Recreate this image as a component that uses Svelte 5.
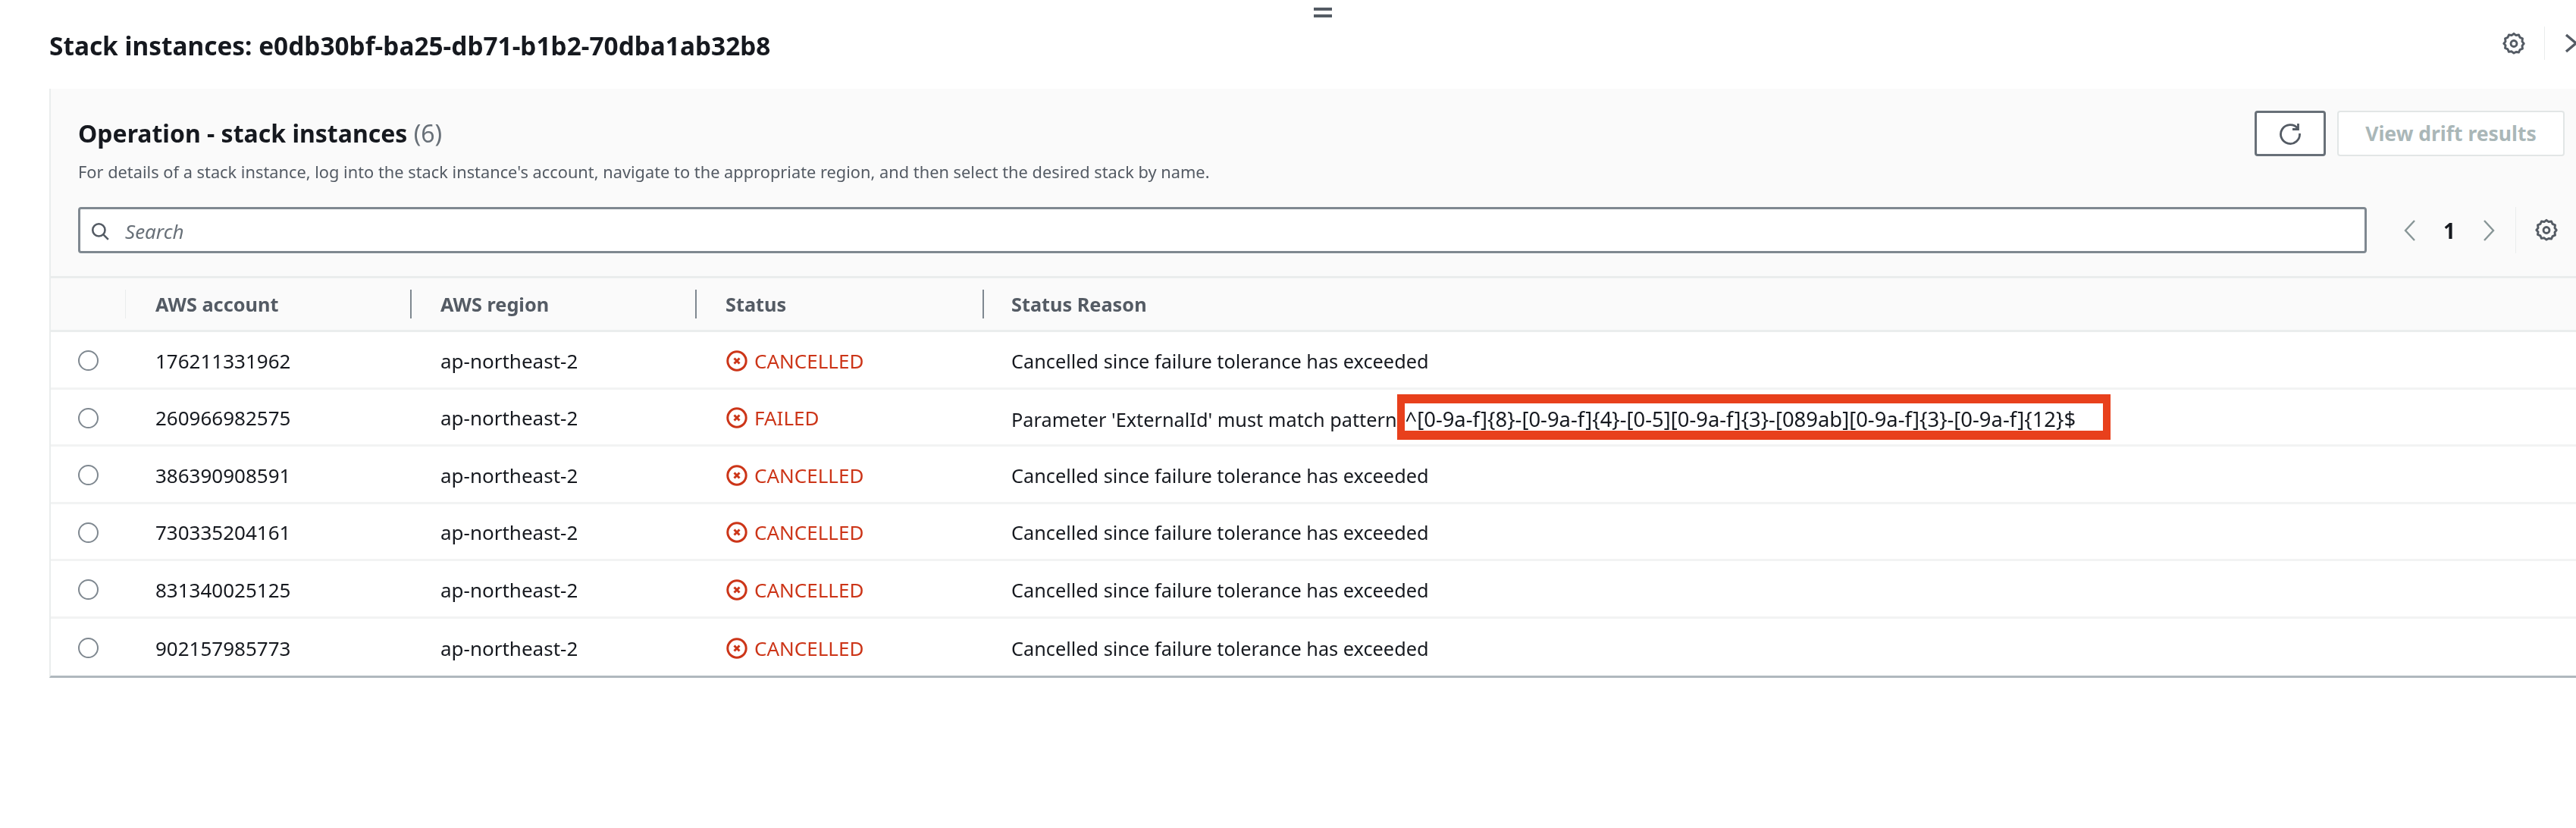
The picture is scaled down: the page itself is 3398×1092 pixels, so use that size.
<script>
  const rows = [
    { account: '176211331962', status: 'CANCELLED' },
    { account: '260966982575', status: 'FAILED' },
    { account: '386390908591', status: 'CANCELLED' },
    { account: '730335204161', status: 'CANCELLED' },
    { account: '831340025125', status: 'CANCELLED' },
    { account: '902157985773', status: 'CANCELLED' }
  ];
  const gear = 'M12 2.5l2.2 1.7 2.8-.4 1.1 2.6 2.6 1.1-.4 2.8 1.7 2.2-1.7 2.2.4 2.8-2.6 1.1-1.1 2.6-2.8-.4L12 22l-2.2-1.7-2.8.4-1.1-2.6-2.6-1.1.4-2.8L2 12.5l1.7-2.2-.4-2.8 2.6-1.1L7 3.8l2.8.4z';
</script>

<div class="page">
  <div class="handle"></div>
  <header class="top">
    <h1>Stack instances: e0db30bf-ba25-db71-b1b2-70dba1ab32b8</h1>
    <div class="top-tools">
      <svg class="gear" viewBox="0 0 24 25"><path d={gear} /><circle cx="12" cy="12.5" r="3" /></svg>
      <span class="sep"></span>
      <svg class="close" viewBox="0 0 32 32"><path d="M3 5l13 11L3 27" /></svg>
    </div>
  </header>

  <section class="panel">
    <div class="head">
      <div class="title-row">
        <div class="titles">
          <h2>Operation - stack instances <span class="count">(6)</span></h2>
          <p>For details of a stack instance, log into the stack instance's account, navigate to the appropriate region, and then select the desired stack by name.</p>
        </div>
        <div class="actions">
          <button class="refresh" aria-label="Refresh">
            <svg viewBox="0 0 32 32"><path d="M26 9.5A12.5 12.5 0 1 0 28.5 16" /><path d="M26.5 3v7.5H19" /></svg>
          </button>
          <button class="drift">View drift results</button>
        </div>
      </div>
      <div class="filter-row">
        <div class="search">
          <svg viewBox="0 0 24 24"><circle cx="10.5" cy="10.5" r="7.5" /><path d="M16 16l6 6" /></svg>
          <span>Search</span>
        </div>
        <div class="pager">
          <svg class="chev" viewBox="0 0 20 32"><path d="M16 3L4 16l12 13" /></svg>
          <b>1</b>
          <svg class="chev" viewBox="0 0 20 32"><path d="M4 3l12 13L4 29" /></svg>
          <span class="sep"></span>
          <svg class="gear" viewBox="0 0 24 25"><path d={gear} /><circle cx="12" cy="12.5" r="3" /></svg>
        </div>
      </div>
    </div>

    <div class="grid thead">
      <div class="cell"></div>
      <div class="cell th">AWS account</div>
      <div class="cell th">AWS region</div>
      <div class="cell th">Status</div>
      <div class="cell th">Status Reason</div>
    </div>

    {#each rows as row}
      <div class="grid row">
        <div class="cell radio-cell"><span class="radio"></span></div>
        <div class="cell">{row.account}</div>
        <div class="cell">ap-northeast-2</div>
        <div class="cell status">
          <svg viewBox="0 0 28 28"><circle cx="14" cy="14" r="12.2" /><path d="M10.5 10.5l7 7M17.5 10.5l-7 7" /></svg>
          {row.status}
        </div>
        <div class="cell reason">
          {#if row.status === 'FAILED'}
            Parameter 'ExternalId' must match pattern<span class="mark">^[0-9a-f]&#123;8&#125;-[0-9a-f]&#123;4&#125;-[0-5][0-9a-f]&#123;3&#125;-[089ab][0-9a-f]&#123;3&#125;-[0-9a-f]&#123;12&#125;$</span>
          {:else}
            Cancelled since failure tolerance has exceeded
          {/if}
        </div>
      </div>
    {/each}
  </section>
</div>

<style>
  :global(body) {
    margin: 0;
    background: #fff;
    overflow: hidden;
  }

  .page {
    position: relative;
    width: 3398px;
    height: 1092px;
    overflow: hidden;
    font-family: 'Noto Sans', sans-serif;
    color: #16191f;
    filter: blur(0.6px);
  }

  .handle {
    position: absolute;
    left: 1733px;
    top: 10px;
    width: 24px;
    height: 5px;
    border-top: 4px solid #545b64;
    border-bottom: 4px solid #545b64;
  }

  .top {
    display: flex;
    align-items: center;
    justify-content: space-between;
    height: 117px;
    padding: 0 0 0 65px;
    box-sizing: border-box;
  }

  .top h1 {
    margin: 0;
    font-size: 33.4px;
    font-weight: 700;
    line-height: 120px;
    height: 117px;
  }

  .top-tools {
    display: flex;
    align-items: center;
    height: 44px;
    margin-top: -3px;
    margin-right: -16px;
  }

  .gear {
    width: 32px;
    height: 33px;
    flex: none;
  }

  .gear path {
    fill: none;
    stroke: #545b64;
    stroke-width: 2.2;
    stroke-linejoin: round;
  }

  .gear circle {
    fill: none;
    stroke: #545b64;
    stroke-width: 2.2;
  }

  .sep {
    width: 1px;
    background: #eaeded;
    align-self: stretch;
  }

  .top-tools .sep {
    margin: 0 25px 0 24px;
  }

  .close {
    width: 32px;
    height: 32px;
  }

  .close path {
    fill: none;
    stroke: #545b64;
    stroke-width: 3.4;
  }

  .panel {
    width: 3398px;
    margin-left: 65px;
    border-left: 2px solid #eaeded;
    border-bottom: 3px solid #b0b8be;
    height: 777px;
    box-sizing: border-box;
  }

  .head {
    background: #fafafa;
    height: 250px;
    padding: 29px 17px 0 36px;
    box-sizing: border-box;
    width: 3333px;
    border-bottom: 3px solid #eaeded;
  }

  .title-row {
    display: flex;
    justify-content: space-between;
    height: 127px;
  }

  .titles {
    padding-top: 8px;
  }

  h2 {
    margin: 0;
    font-size: 32px;
    font-weight: 700;
    line-height: 44px;
  }

  .count {
    font-weight: 400;
    color: #687078;
  }

  .titles p {
    margin: 14px 0 0;
    font-size: 21.8px;
    line-height: 30px;
    color: #545b64;
  }

  .actions {
    display: flex;
    gap: 15px;
    height: 60px;
  }

  button {
    background: #fff;
    box-sizing: border-box;
    height: 60px;
    padding: 0;
    font-family: inherit;
  }

  .refresh {
    width: 94px;
    border: 3px solid #687078;
    border-radius: 4px;
    display: flex;
    align-items: center;
    justify-content: center;
  }

  .refresh svg {
    width: 32px;
    height: 32px;
    fill: none;
    stroke: #545b64;
    stroke-width: 2.8;
  }

  .drift {
    width: 300px;
    border: 2px solid #e2e6e6;
    border-radius: 4px;
    font-size: 26.5px;
    font-weight: 700;
    color: #aab7b8;
  }

  .filter-row {
    display: flex;
    align-items: center;
    height: 61px;
  }

  .search {
    width: 3019px;
    height: 61px;
    box-sizing: border-box;
    background: #fff;
    border: 3px solid #7f8890;
    border-radius: 4px;
    display: flex;
    align-items: center;
    gap: 20px;
    padding: 2px 0 0 13px;
    font-size: 26px;
    font-style: italic;
    color: #687078;
  }

  .search svg {
    width: 26px;
    height: 26px;
    fill: none;
    stroke: #545b64;
    stroke-width: 2.4;
  }

  .pager {
    display: flex;
    align-items: center;
    height: 61px;
    margin-left: 47px;
  }

  .pager b {
    width: 84px;
    text-align: center;
    font-size: 28px;
  }

  .chev {
    width: 20px;
    height: 32px;
    fill: none;
    stroke: #879596;
    stroke-width: 2.4;
  }

  .pager .sep {
    margin: 0 24px 0 25px;
  }

  .grid {
    display: grid;
    grid-template-columns: 99px 376px 376px 377px 1fr;
    width: 3333px;
    box-sizing: border-box;
  }

  .thead {
    background: #fafafa;
    height: 71px;
    align-items: center;
    border-bottom: 3px solid #eaeded;
  }

  .cell {
    font-size: 26px;
    padding-left: 39px;
    white-space: nowrap;
    position: relative;
  }

  .th {
    font-size: 25.3px;
    font-weight: 700;
    color: #545b64;
  }

  .th::before {
    content: '';
    position: absolute;
    left: -1px;
    top: -2px;
    bottom: -2px;
    width: 2px;
    background: #7f8890;
  }

  .thead .cell:nth-child(2)::before {
    width: 1px;
    background: #eaeded;
  }

  .thead .cell:last-child::before {
    left: 1px;
  }

  .row {
    height: 75.5px;
    padding-top: 3px;
    align-items: center;
    border-bottom: 3px solid #f2f3f3;
  }

  .row:last-child {
    border-bottom: none;
  }

  .radio-cell {
    padding-left: 36px;
    display: flex;
  }

  .radio {
    width: 27px;
    height: 27px;
    box-sizing: border-box;
    border: 2px solid #7f8890;
    border-radius: 50%;
  }

  .status {
    display: flex;
    align-items: center;
    gap: 9px;
    color: #cc3518;
    padding-left: 40px;
  }

  .status svg {
    width: 28px;
    height: 28px;
    flex: none;
    fill: none;
    stroke: #cc3518;
    stroke-width: 3;
  }

  .reason {
    font-size: 25.3px;
  }

  .mark {
    display: inline-block;
    border: 12px solid #e8401c;
    border-left-width: 10px;
    border-right-width: 10px;
    padding: 6px 36px 0 1px;
    margin: -12px 0;
    line-height: 30px;
    font-size: 27.4px;
  }
</style>
